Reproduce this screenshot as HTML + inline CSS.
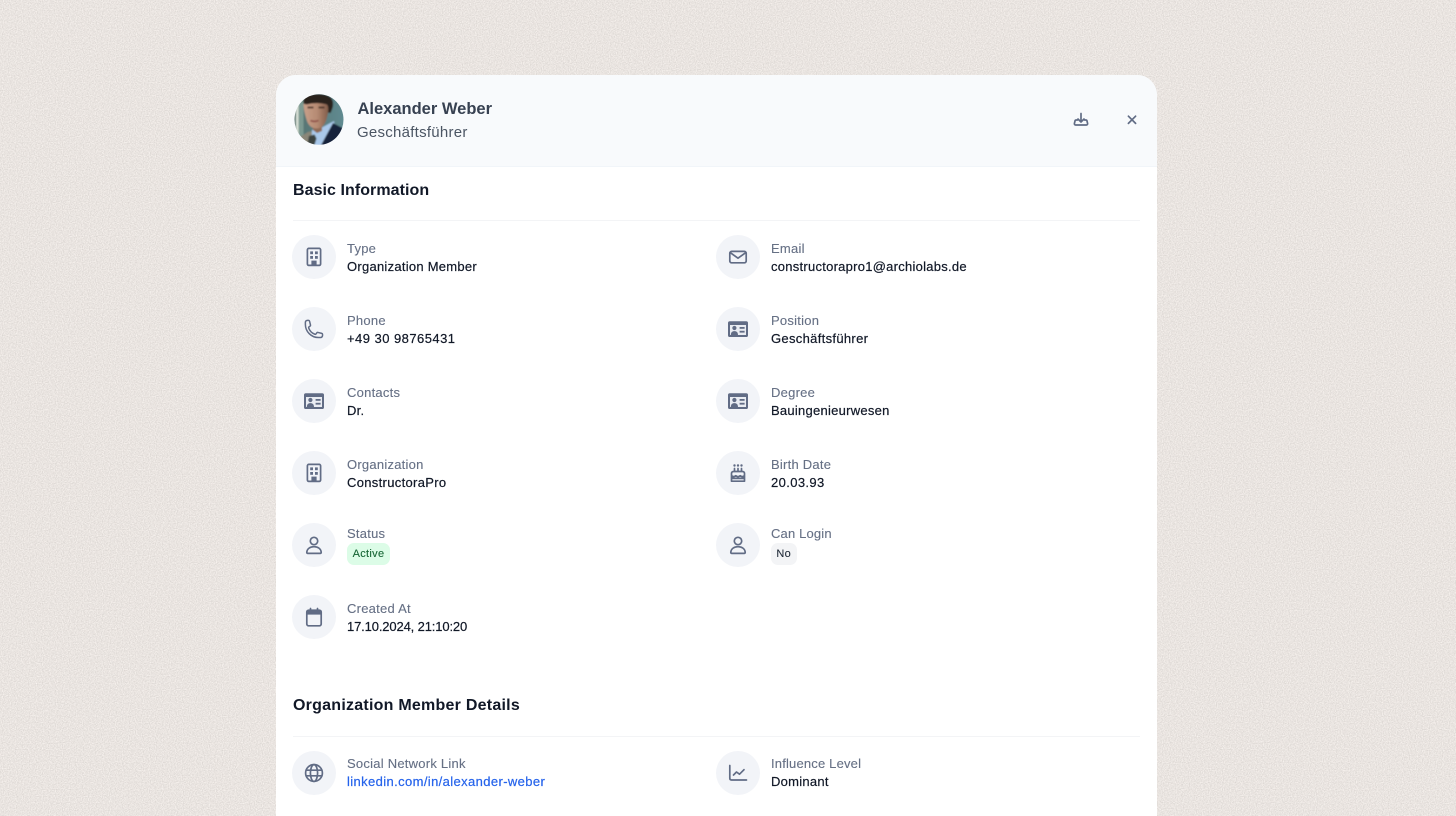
<!DOCTYPE html>
<html lang="en"><head><meta charset="utf-8"><title>Alexander Weber</title>
<style>
*{box-sizing:border-box}
html,body{margin:0;padding:0;width:1456px;height:816px;overflow:hidden;background:#e9e4e0;font-family:"Liberation Sans",Arial,sans-serif}
.page{position:relative;width:1456px;height:816px;overflow:hidden}
.noise{position:absolute;left:0;top:0}
.card{position:absolute;left:276px;top:75px;width:881px;height:741px;background:#fff;border-radius:20px 20px 0 0;overflow:hidden}
.head{position:absolute;left:0;top:0;width:881px;height:92px;background:#f8fafc;border-bottom:1px solid #f1f5f9}
.name{position:absolute;left:81.5px;top:24px;font-size:16.5px;line-height:20px;font-weight:bold;color:#374151;letter-spacing:0}
.sub{position:absolute;left:81px;top:48px;font-size:15px;line-height:20px;color:#4b5563;letter-spacing:.26px}
.avatar{position:absolute;left:18px;top:19px}
.h2{position:absolute;left:17px;font-size:16px;line-height:22px;font-weight:bold;color:#111827}
.rule{position:absolute;left:17px;width:847px;height:1px;background:#f3f4f6}
.row{position:absolute;width:400px;height:44px}
.ic{position:absolute;left:-.5px;top:0;width:44px;height:44px;border-radius:50%;background:#f2f4f8}
.ic svg{position:absolute;left:0;top:0}
.l{position:absolute;left:54.5px;top:5px;font-size:13px;line-height:18px;color:#667085;letter-spacing:.24px;white-space:nowrap;-webkit-text-stroke:.12px currentColor}
.v{position:absolute;left:54.5px;top:23px;font-size:13px;line-height:18px;color:#111827;letter-spacing:.26px;white-space:nowrap;-webkit-text-stroke:.2px currentColor}
.v.link{color:#2563eb;letter-spacing:.38px}
.badge{position:absolute;left:54.5px;top:20px;height:22px;border-radius:7px;font-size:11px;line-height:23px;text-align:center;letter-spacing:.3px;-webkit-text-stroke:.1px currentColor}
.s{fill:none;stroke:#616c85;stroke-width:1.7;stroke-linecap:round;stroke-linejoin:round}
.f{fill:#616c85}
.top{position:absolute}
</style></head><body>
<div class="page">
<svg class="noise" width="1456" height="816">
<filter id="n" x="0" y="0" width="100%" height="100%" color-interpolation-filters="sRGB">
<feTurbulence type="fractalNoise" baseFrequency="0.85" numOctaves="2" seed="4"/>
<feColorMatrix type="matrix" values=".19 0 0 0 .82  .19 0 0 0 .8  .19 0 0 0 .785  0 0 0 0 1"/>
</filter>
<rect width="1456" height="816" filter="url(#n)"/>
</svg>
<svg width="0" height="0" style="position:absolute">
<defs>
<g id="building"><rect class="s" x="15.4" y="13.4" width="13.2" height="17" rx="1.4"/><rect class="f" x="18.2" y="16.4" width="2.8" height="2.8"/><rect class="f" x="23" y="16.4" width="2.8" height="2.8"/><rect class="f" x="18.2" y="21" width="2.8" height="2.8"/><rect class="f" x="23" y="21" width="2.8" height="2.8"/><rect class="f" x="19.4" y="25.6" width="5.2" height="4.8"/></g>
<g id="mail"><rect class="s" x="13.8" y="16.4" width="16.4" height="11.4" rx="1.8"/><path class="s" d="M14.2 17.6l7.8 5.6 7.8-5.6"/></g>
<g id="phone"><g transform="translate(11.4 11.4) scale(.88)"><path class="s" stroke-width="1.9" d="M2.25 6.75c0 8.284 6.716 15 15 15h2.25a2.25 2.25 0 002.25-2.25v-1.372c0-.516-.351-.966-.852-1.091l-4.423-1.106c-.44-.11-.902.055-1.173.417l-.97 1.293c-.282.376-.769.542-1.21.38a12.035 12.035 0 01-7.143-7.143c-.162-.441.004-.928.38-1.21l1.293-.97c.363-.271.527-.734.417-1.173L6.963 3.102a1.125 1.125 0 00-1.091-.852H4.5A2.25 2.25 0 002.25 4.5v2.25z"/></g></g>
<g id="idcard"><rect class="f" x="12" y="14.2" width="20" height="15.8" rx="1.8"/><rect x="14" y="18" width="16" height="10" fill="#e9ecf2"/><circle class="f" cx="18.4" cy="21" r="2.1"/><path class="f" d="M14.8 28c.1-2.900 1.500-3.900 3.600-3.900s3.500 1 3.600 3.900z"/><rect class="f" x="23.6" y="20" width="5" height="1.800"/><rect class="f" x="23.6" y="23.800" width="5" height="1.800"/></g>
<g id="user"><circle class="s" cx="22" cy="18" r="3.700"/><path class="s" d="M14.800 29.400c.2-3.800 3.400-5.700 7.200-5.700s7 1.900 7.200 5.700c0 .7-.5 1-1.100 1H15.900c-.6 0-1.100-.3-1.100-1z"/></g>
<g id="cal"><rect class="s" x="14.800" y="15.200" width="14.400" height="15.600" rx="1.800"/><rect class="f" x="14.800" y="15.200" width="14.400" height="4.400"/><path class="s" d="M18.500 13.500v2M25.500 13.500v2"/></g>
<g id="cake"><path class="s" stroke-width="1.400" d="M15.500 22.400c0-1.100.9-1.900 2-1.900h9c1.100 0 2 .8 2 1.900v7.800h-13zM15.500 24.700c1.500 1.300 2.900 1.300 4.400 0 1.400 1.300 2.800 1.300 4.200 0 1.500 1.300 2.900 1.300 4.400 0M15.500 27.400h13"/><path class="s" stroke-width="1.300" d="M18.500 17.500V20M22 17.500V20M25.500 17.500V20"/><circle class="f" cx="18.500" cy="14.500" r="1.200"/><circle class="f" cx="22" cy="14.500" r="1.200"/><circle class="f" cx="25.500" cy="14.500" r="1.200"/></g>
<g id="globe"><circle class="s" cx="22" cy="22" r="8.400"/><ellipse class="s" cx="22" cy="22" rx="3.600" ry="8.400"/><path class="s" d="M14.300 19.200h15.400M14.300 24.800h15.400"/></g>
<g id="chart"><path class="s" d="M13.800 14.500v12.800c0 1 .6 1.700 1.700 1.700H30.500"/><path class="s" d="M17.500 24l3-3 3 2.200 4.500-4.500"/></g>
</defs>
</svg>
<div class="card">
<div class="head">
<svg class="avatar" width="50" height="51" viewBox="0 0 50 51">
<defs><clipPath id="av"><ellipse cx="25" cy="25.500" rx="24.500" ry="25.300"/></clipPath><filter id="b" x="-10%" y="-10%" width="120%" height="120%"><feGaussianBlur stdDeviation=".8"/></filter>
<linearGradient id="sk" x1="0" y1="0" x2="1" y2="0"><stop offset="0" stop-color="#c9a08a"/><stop offset=".55" stop-color="#b58a72"/><stop offset="1" stop-color="#7f5a47"/></linearGradient>
<linearGradient id="bgg" x1="0" y1="0" x2="1" y2="0"><stop offset="0" stop-color="#56706d"/><stop offset="1" stop-color="#5f8b92"/></linearGradient></defs>
<g clip-path="url(#av)"><g filter="url(#b)">
<rect x="-2" y="-2" width="54" height="55" fill="url(#bgg)"/>
<rect x="2" y="6" width="2.500" height="36" fill="#d8e0d6"/>
<rect x="4.500" y="4" width="5" height="40" fill="#7d9a92"/>
<path d="M4 53L6 43 14 38 24 36 26 53z" fill="#8a8678"/>
<path d="M17 53L18 36 27 34 40 27 42 38 28 53z" fill="#a9c8ea"/>
<path d="M26 53L39 29 54 37V53z" fill="#14233a"/>
<path d="M15 42l5.500-1.500 2 4-2.500 8h-7z" fill="#3a423f"/>
<path d="M19 30h9v7l-5 2-4-3z" fill="#8f6a56"/>
<path d="M9.500 9c0-5 5-7 12.500-7 7 0 12 2 12.500 7 .5 6-.5 11-2 16-1.500 6-5 9.500-10 9.500-5 0-8.500-3.500-10-9-1.500-5-3-10-3-16.500z" fill="url(#sk)"/>
<path d="M9.500 9C8 3 15 0 24 0c9 0 15 3 15 9 .5 3-1 7-2.500 10l-2.500-.5c.5-3 .5-6-1-8-7-2-14-1.500-18-.5-2 .5-4 .5-5.500-.5z" fill="#29211e"/>
<path d="M13.500 13.500h6M24.500 13.500h6" stroke="#4a3228" stroke-width="1.700"/>
<path d="M16.500 26.500c2.500 1.200 5 1.200 8 0" stroke="#8f4f48" stroke-width="1.700" fill="none"/>
</g></g>
</svg>
<div class="name">Alexander Weber</div>
<div class="sub">Geschäftsführer</div>
<svg class="top" style="left:796px;top:34px" width="20" height="20" viewBox="0 0 20 20"><path class="s" stroke-width="1.300" d="M9 4.500v8.500M6 10l3 3 3-3M5.500 11H4.300c-.7 0-1.200.4-1.300 1l-.6 2.500c-.1.800.3 1.500 1.200 1.500h10.800c.9 0 1.300-.7 1.200-1.500l-.6-2.500c-.1-.6-.6-1-1.300-1H12.500"/></svg>
<svg class="top" style="left:850px;top:38.500px" width="12" height="12" viewBox="0 0 12 12"><path class="s" stroke-width="1.100" d="M2.400 2.200l7.200 7.200M9.600 2.200l-7.200 7.200"/></svg>
</div>
<div class="h2" style="top:105px;letter-spacing:.06px">Basic Information</div>
<div class="rule" style="top:145px"></div>

<div class="row" style="left:16.500px;top:160px"><div class="ic"><svg width="44" height="44"><use href="#building"/></svg></div><div class="l">Type</div><div class="v">Organization Member</div></div>
<div class="row" style="left:440.500px;top:160px"><div class="ic"><svg width="44" height="44"><use href="#mail"/></svg></div><div class="l">Email</div><div class="v">constructorapro1@archiolabs.de</div></div>

<div class="row" style="left:16.500px;top:232px"><div class="ic"><svg width="44" height="44"><use href="#phone"/></svg></div><div class="l">Phone</div><div class="v" style="letter-spacing:.46px">+49 30 98765431</div></div>
<div class="row" style="left:440.500px;top:232px"><div class="ic"><svg width="44" height="44"><use href="#idcard"/></svg></div><div class="l">Position</div><div class="v" style="letter-spacing:.32px">Geschäftsführer</div></div>

<div class="row" style="left:16.500px;top:304px"><div class="ic"><svg width="44" height="44"><use href="#idcard"/></svg></div><div class="l">Contacts</div><div class="v">Dr.</div></div>
<div class="row" style="left:440.500px;top:304px"><div class="ic"><svg width="44" height="44"><use href="#idcard"/></svg></div><div class="l">Degree</div><div class="v">Bauingenieurwesen</div></div>

<div class="row" style="left:16.500px;top:376px"><div class="ic"><svg width="44" height="44"><use href="#building"/></svg></div><div class="l">Organization</div><div class="v" style="letter-spacing:.32px">ConstructoraPro</div></div>
<div class="row" style="left:440.500px;top:376px"><div class="ic"><svg width="44" height="44"><use href="#cake"/></svg></div><div class="l">Birth Date</div><div class="v" style="letter-spacing:.38px">20.03.93</div></div>

<div class="row" style="left:16.500px;top:448px"><div class="ic"><svg width="44" height="44"><use href="#user"/></svg></div><div class="l" style="top:2px">Status</div><div class="badge" style="width:43px;background:#dcfce7;color:#166534">Active</div></div>
<div class="row" style="left:440.500px;top:448px"><div class="ic"><svg width="44" height="44"><use href="#user"/></svg></div><div class="l" style="top:2px;letter-spacing:.16px">Can Login</div><div class="badge" style="width:25.500px;background:#f3f4f6;color:#1f2937">No</div></div>

<div class="row" style="left:16.500px;top:520px"><div class="ic"><svg width="44" height="44"><use href="#cal"/></svg></div><div class="l">Created At</div><div class="v" style="letter-spacing:-.14px">17.10.2024, 21:10:20</div></div>

<div class="h2" style="top:620px;letter-spacing:.24px">Organization Member Details</div>
<div class="rule" style="top:661px"></div>

<div class="row" style="left:16.500px;top:674.500px"><div class="ic" style="top:1px"><svg width="44" height="44"><use href="#globe"/></svg></div><div class="l">Social Network Link</div><div class="v link">linkedin.com/in/alexander-weber</div></div>
<div class="row" style="left:440.500px;top:674.500px"><div class="ic" style="top:1px"><svg width="44" height="44"><use href="#chart"/></svg></div><div class="l" style="letter-spacing:.18px">Influence Level</div><div class="v">Dominant</div></div>
</div>
</div>
</body></html>
